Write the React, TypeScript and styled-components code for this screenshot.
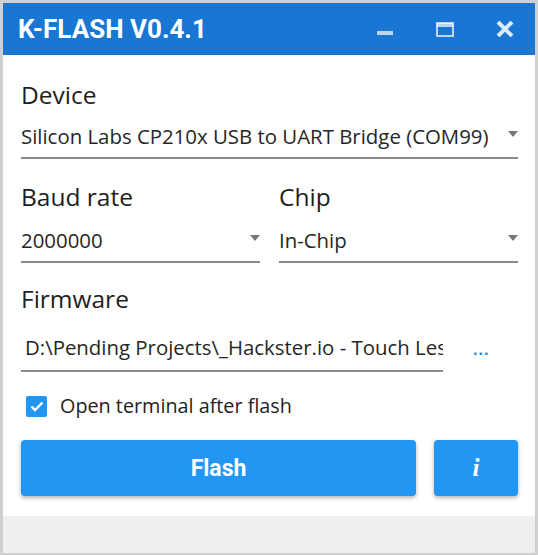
import React from 'react';
import styled, { createGlobalStyle } from 'styled-components';

const GlobalStyle = createGlobalStyle`
  html, body {
    margin: 0;
    padding: 0;
    background: #d0d0d0;
  }
  * {
    box-sizing: border-box;
  }
`

const Frame = styled.div`
  width: 538px;
  height: 555px;
  border: 3px solid #d0d0d0;
  border-bottom-width: 2px;
  display: flex;
  flex-direction: column;
  font-family: "Open Sans", "Noto Sans", sans-serif;
`

const TitleBar = styled.div`
  height: 52px;
  flex: none;
  background: #1976d2;
  display: flex;
  align-items: center;
  padding-left: 15px;
`

const Title = styled.div`
  flex: 1;
  color: #fff;
  font-family: Roboto, "Liberation Sans", sans-serif;
  font-weight: 700;
  font-size: 26px;
`

const Control = styled.div`
  width: 60px;
  height: 52px;
  display: flex;
  align-items: center;
  justify-content: center;
`

const Content = styled.div`
  flex: 1;
  background: #fff;
  padding: 24px 17px 0 18px;
  display: flex;
  flex-direction: column;
`

const Field = styled.div<{ $gap?: number }>`
  margin-top: ${p => p.$gap ?? 0}px;
  min-width: 0;
`

const Label = styled.div`
  font-size: 24.5px;
  line-height: 32px;
  color: #1e1e1e;
`

const Select = styled.div<{ $top: number }>`
  margin-top: ${p => p.$top}px;
  display: flex;
  align-items: center;
  line-height: 26px;
  font-size: 20.4px;
  color: #262626;
  padding-bottom: 8px;
  border-bottom: 2px solid #8a8a8a;
`

const Value = styled.div`
  flex: 1;
  min-width: 0;
  white-space: nowrap;
  overflow: hidden;
`

const Arrow = styled.div`
  width: 0;
  height: 0;
  border-left: 5.5px solid transparent;
  border-right: 5.5px solid transparent;
  border-top: 6px solid #777;
  margin-top: -4px;
`

const Pair = styled.div`
  margin-top: 22px;
  display: grid;
  grid-template-columns: 1fr 1fr;
  column-gap: 19px;
`

const FileRow = styled.div`
  margin-top: 19px;
  display: flex;
  align-items: flex-end;
`

const FileInput = styled.div`
  width: 422px;
  font-size: 20.4px;
  line-height: 26px;
  color: #262626;
  padding: 0 0 10px 4px;
  border-bottom: 2px solid #8a8a8a;
  white-space: nowrap;
  overflow: hidden;
`

const Browse = styled.div`
  margin-left: 30px;
  margin-bottom: 17px;
  color: #1e88e5;
  font-family: "Liberation Sans", sans-serif;
  font-weight: 700;
  font-size: 16px;
  letter-spacing: 1px;
  line-height: 10px;
`

const CheckRow = styled.label`
  margin-top: 23px;
  display: flex;
  align-items: center;
  gap: 13px;
  padding-left: 5px;
  font-size: 19.8px;
  line-height: 22px;
  color: #1e1e1e;
`

const Box = styled.span`
  width: 21px;
  height: 21px;
  border-radius: 2px;
  background: #2196f3;
  display: flex;
  align-items: center;
  justify-content: center;
`

const Buttons = styled.div`
  margin-top: 23px;
  display: flex;
  gap: 18px;
`

const Button = styled.button<{ $wide?: boolean }>`
  height: 56px;
  width: ${p => (p.$wide ? '395px' : '84px')};
  border: none;
  border-radius: 4px;
  background: #2196f3;
  color: #fff;
  box-shadow: 0 2px 4px rgba(0, 0, 0, 0.3);
  font-family: Roboto, "Liberation Sans", sans-serif;
  font-weight: 700;
  font-size: 23px;
  display: flex;
  align-items: center;
  justify-content: center;
  padding: 0;
`

const InfoGlyph = styled.span`
  font-family: "Liberation Serif", serif;
  font-style: italic;
  font-weight: 700;
  font-size: 25px;
`

const Footer = styled.div`
  height: 37px;
  flex: none;
  background: #efefef;
`

const App = () => (
  <Frame>
    <GlobalStyle />
    <TitleBar>
      <Title>K-FLASH V0.4.1</Title>
      <Control>
        <svg width="16" height="16" viewBox="0 0 16 16">
          <rect x="0" y="10" width="16" height="4" fill="rgba(255,255,255,0.7)" />
        </svg>
      </Control>
      <Control>
        <svg width="18" height="15" viewBox="0 0 18 15">
          <rect x="1" y="1" width="16" height="13" fill="none" stroke="rgba(255,255,255,0.7)" strokeWidth="2" />
          <rect x="1" y="1" width="16" height="4" fill="rgba(255,255,255,0.7)" />
        </svg>
      </Control>
      <Control>
        <svg width="18" height="16" viewBox="0 0 18 16">
          <path d="M2 1 L16 15 M16 1 L2 15" stroke="rgba(255,255,255,0.85)" strokeWidth="4" />
        </svg>
      </Control>
    </TitleBar>
    <Content>
      <Field>
        <Label>Device</Label>
        <Select $top={12}>
          <Value>Silicon Labs CP210x USB to UART Bridge (COM99)</Value>
          <Arrow />
        </Select>
      </Field>
      <Pair>
        <Field>
          <Label>Baud rate</Label>
          <Select $top={14}>
            <Value>2000000</Value>
            <Arrow />
          </Select>
        </Field>
        <Field>
          <Label>Chip</Label>
          <Select $top={14}>
            <Value>In-Chip</Value>
            <Arrow />
          </Select>
        </Field>
      </Pair>
      <Field $gap={20}>
        <Label>Firmware</Label>
        <FileRow>
          <FileInput>D:\Pending Projects\_Hackster.io - Touch Less</FileInput>
          <Browse>...</Browse>
        </FileRow>
      </Field>
      <CheckRow>
        <Box>
          <svg width="14" height="11" viewBox="0 0 14 11">
            <path d="M1.5 5.5 L5 9 L12.5 1.5" fill="none" stroke="#fff" strokeWidth="2.4" />
          </svg>
        </Box>
        Open terminal after flash
      </CheckRow>
      <Buttons>
        <Button $wide>Flash</Button>
        <Button>
          <InfoGlyph>i</InfoGlyph>
        </Button>
      </Buttons>
    </Content>
    <Footer />
  </Frame>
);

export default App;
